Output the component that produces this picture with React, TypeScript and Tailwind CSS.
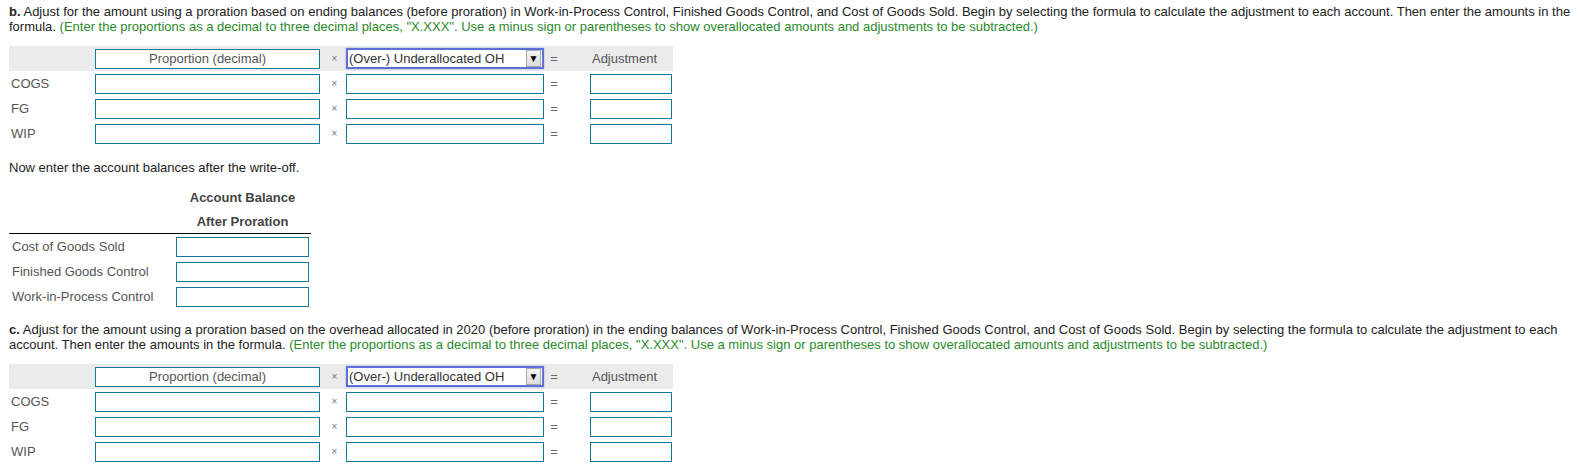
import React from 'react';

const font = { fontFamily: '"Liberation Sans", Arial, sans-serif' };

function Box({ className = '', children }: { className?: string; children?: React.ReactNode }) {
  return (
    <div className={`h-[20px] border border-[#137a96] bg-white ${className}`}>{children}</div>
  );
}

function OhSelect() {
  return (
    <div className="flex h-[21px] w-[198px] items-center border-2 border-[#5e6fd8] bg-white shadow-[0_0_2px_#9fb0f0]">
      <span className="flex-1 pl-[1px] text-[13px] leading-none text-[#333]">(Over-) Underallocated OH</span>
      <span className="mr-[1px] flex h-[17px] w-[15px] items-center justify-center border border-[#a9a9a9] bg-gradient-to-b from-[#f4f4f4] to-[#dcdcdc] text-[10px] leading-none text-black">
        ▼
      </span>
    </div>
  );
}

function Times() {
  return <div className="w-[26px] pl-[3px] text-center text-[10px] text-[#777]">×</div>;
}

function Equals() {
  return <div className="w-[20px] text-center text-[13px] text-[#666]">=</div>;
}

function ProrationTable() {
  const rows = ['COGS', 'FG', 'WIP'];
  return (
    <div className="ml-[9px] w-[664px] text-[13px]">
      <div className="flex h-[25px] items-center bg-[#ebebeb]">
        <div className="w-[86px]" />
        <Box className="flex w-[225px] items-center justify-center text-[#555]">Proportion (decimal)</Box>
        <Times />
        <OhSelect />
        <Equals />
        <div className="w-[109px] pl-[12px] text-center text-[#555]">Adjustment</div>
      </div>
      {rows.map((r) => (
        <div key={r} className="flex h-[25px] items-center">
          <div className="w-[86px] pl-[2px] text-[#555]">{r}</div>
          <Box className="w-[225px]" />
          <Times />
          <Box className="w-[198px]" />
          <Equals />
          <Box className="ml-[26px] w-[82px]" />
        </div>
      ))}
    </div>
  );
}

function BalanceTable() {
  const rows = ['Cost of Goods Sold', 'Finished Goods Control', 'Work-in-Process Control'];
  return (
    <div className="ml-[9px] mt-[11px] w-[302px] text-[13px]">
      <div className="flex">
        <div className="w-[167px]" />
        <div className="w-[133px] font-bold text-[#444]">
          <div className="flex h-[24px] items-center justify-center">Account Balance</div>
          <div className="flex h-[23px] items-center justify-center">After Proration</div>
        </div>
      </div>
      <div className="border-b border-black" />
      {rows.map((r) => (
        <div key={r} className="flex h-[25px] items-center">
          <div className="w-[167px] pl-[3px] text-[#555]">{r}</div>
          <Box className="w-[133px]" />
        </div>
      ))}
    </div>
  );
}

export default function App() {
  return (
    <div className="w-[1580px] bg-white pb-[6px] text-[13px] text-[#222]" style={font}>
      <div className="pl-[9px] pt-[4px] leading-[15px]">
        <div className="whitespace-nowrap">
          <b>b.</b> Adjust for the amount using a proration based on ending balances (before proration) in
          Work-in-Process Control, Finished Goods Control, and Cost of Goods Sold. Begin by selecting the formula to
          calculate the adjustment to each account. Then enter the amounts in the
        </div>
        <div className="whitespace-nowrap">
          formula.{' '}
          <span className="text-[#2a8a2a]">
            (Enter the proportions as a decimal to three decimal places, "X.XXX". Use a minus sign or parentheses to
            show overallocated amounts and adjustments to be subtracted.)
          </span>
        </div>
      </div>

      <div className="mt-[12px]">
        <ProrationTable />
      </div>

      <div className="mt-[14px] pl-[9px] leading-[15px]">Now enter the account balances after the write-off.</div>

      <BalanceTable />

      <div className="mt-[13px] pl-[9px] leading-[15px]">
        <div className="whitespace-nowrap">
          <b>c.</b> Adjust for the amount using a proration based on the overhead allocated in 2020 (before proration)
          in the ending balances of Work-in-Process Control, Finished Goods Control, and Cost of Goods Sold. Begin by
          selecting the formula to calculate the adjustment to each
        </div>
        <div className="whitespace-nowrap">
          account. Then enter the amounts in the formula.{' '}
          <span className="text-[#2a8a2a]">
            (Enter the proportions as a decimal to three decimal places, "X.XXX". Use a minus sign or parentheses to
            show overallocated amounts and adjustments to be subtracted.)
          </span>
        </div>
      </div>

      <div className="mt-[12px]">
        <ProrationTable />
      </div>
    </div>
  );
}
